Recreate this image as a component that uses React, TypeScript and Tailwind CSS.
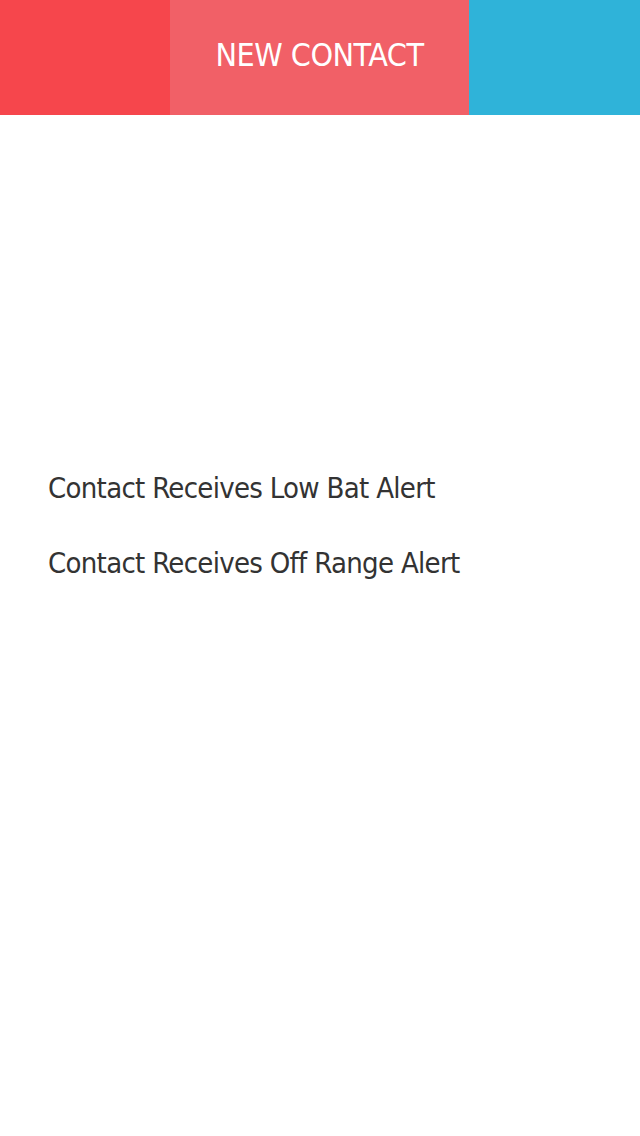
export default function App() {
  return (
    <div className="w-[640px] h-[1136px] bg-white" style={{ fontFamily: '"DejaVu Sans Condensed", "DejaVu Sans", sans-serif' }}>
      <header className="flex h-[115px]">
        <div className="w-[170px] bg-[#f6464c]" />
        <div className="w-[299px] bg-[#f16067] flex items-center justify-center">
          <h1 className="text-white text-[32px] tracking-[-0.5px] mt-[-6px]">NEW CONTACT</h1>
        </div>
        <div className="flex-1 bg-[#2fb3d9]" />
      </header>
      <div className="pt-[354px] pl-[48px] flex flex-col gap-[37px] text-[#333333] text-[29px] tracking-[-0.7px]">
        <p className="leading-[38px]">Contact Receives Low Bat Alert</p>
        <p className="leading-[38px]">Contact Receives Off Range Alert</p>
      </div>
    </div>
  );
}
